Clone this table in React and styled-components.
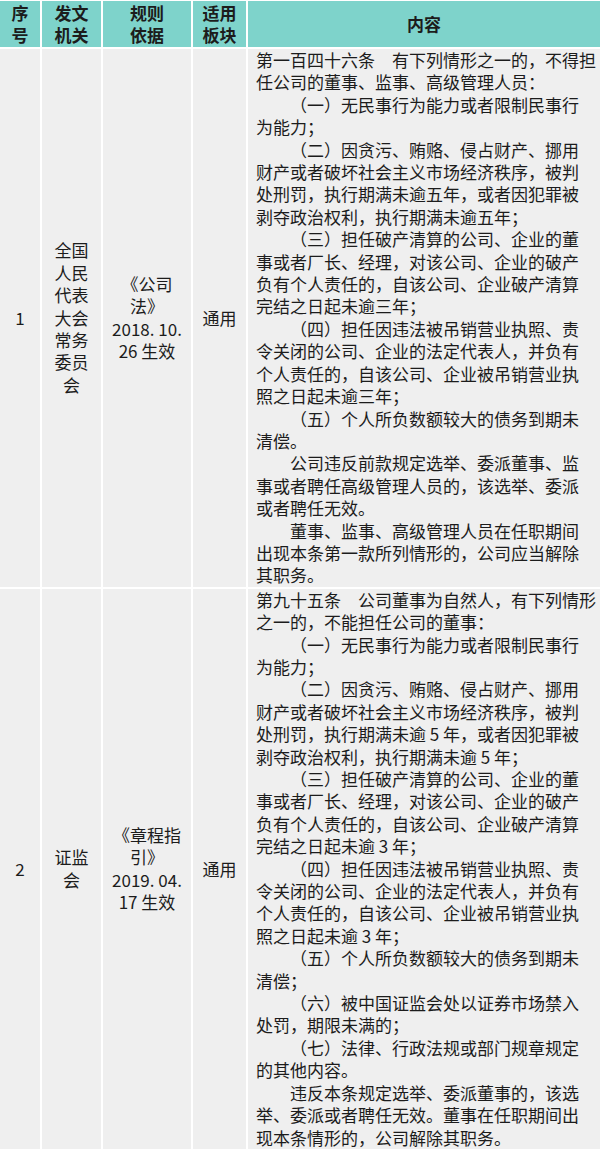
import React from 'react';
import styled, { createGlobalStyle } from 'styled-components';

const GlobalStyle = createGlobalStyle`
  html, body {
    margin: 0;
    padding: 0;
    background: #ffffff;
  }
  body {
    font-family: "Noto Sans CJK SC", "Noto Sans", sans-serif;
    color: #1c1c1c;
  }
`;

const COLUMNS = '40px 59px 88px 53px 1fr';

const Table = styled.div`
  display: flex;
  flex-direction: column;
  gap: 2px;
  width: 600px;
  padding-top: 1px;
  background: #ffffff;
`;

const Row = styled.div`
  display: grid;
  grid-template-columns: ${COLUMNS};
  gap: 2px;
`;

const HeadCell = styled.div`
  display: flex;
  flex-direction: column;
  align-items: center;
  justify-content: center;
  height: 46px;
  background: #7ed3cb;
  font-size: 17px;
  font-weight: 700;
  line-height: 22.4px;
  text-align: center;
`;

const Cell = styled.div`
  display: flex;
  flex-direction: column;
  align-items: center;
  justify-content: center;
  background: #efefef;
  font-size: 17px;
  line-height: 22.4px;
  text-align: center;
`;

const ContentCell = styled.div`
  background: #efefef;
  font-size: 17px;
  line-height: 22.4px;
  padding: 0 4px 0 8px;
`;

const Line = styled.span`
  display: block;
  white-space: nowrap;
  padding-left: ${(p) => (p.$indent ? '2em' : '0')};
`;

const headers = [
  ['序', '号'],
  ['发文', '机关'],
  ['规则', '依据'],
  ['适用', '板块'],
  ['内容'],
];

const rows = [
  {
    no: '1',
    issuer: ['全国', '人民', '代表', '大会', '常务', '委员', '会'],
    basis: ['《公司', '法》', '2018. 10.', '26 生效'],
    scope: '通用',
    content: [
      ['第一百四十六条　有下列情形之一的，不得担', '任公司的董事、监事、高级管理人员：'],
      ['（一）无民事行为能力或者限制民事行', '为能力；'],
      [
        '（二）因贪污、贿赂、侵占财产、挪用',
        '财产或者破坏社会主义市场经济秩序，被判',
        '处刑罚，执行期满未逾五年，或者因犯罪被',
        '剥夺政治权利，执行期满未逾五年；',
      ],
      [
        '（三）担任破产清算的公司、企业的董',
        '事或者厂长、经理，对该公司、企业的破产',
        '负有个人责任的，自该公司、企业破产清算',
        '完结之日起未逾三年；',
      ],
      [
        '（四）担任因违法被吊销营业执照、责',
        '令关闭的公司、企业的法定代表人，并负有',
        '个人责任的，自该公司、企业被吊销营业执',
        '照之日起未逾三年；',
      ],
      ['（五）个人所负数额较大的债务到期未', '清偿。'],
      ['公司违反前款规定选举、委派董事、监', '事或者聘任高级管理人员的，该选举、委派', '或者聘任无效。'],
      ['董事、监事、高级管理人员在任职期间', '出现本条第一款所列情形的，公司应当解除', '其职务。'],
    ],
  },
  {
    no: '2',
    issuer: ['证监', '会'],
    basis: ['《章程指', '引》', '2019. 04.', '17 生效'],
    scope: '通用',
    content: [
      ['第九十五条　公司董事为自然人，有下列情形', '之一的，不能担任公司的董事：'],
      ['（一）无民事行为能力或者限制民事行', '为能力；'],
      [
        '（二）因贪污、贿赂、侵占财产、挪用',
        '财产或者破坏社会主义市场经济秩序，被判',
        '处刑罚，执行期满未逾 5 年，或者因犯罪被',
        '剥夺政治权利，执行期满未逾 5 年；',
      ],
      [
        '（三）担任破产清算的公司、企业的董',
        '事或者厂长、经理，对该公司、企业的破产',
        '负有个人责任的，自该公司、企业破产清算',
        '完结之日起未逾 3 年；',
      ],
      [
        '（四）担任因违法被吊销营业执照、责',
        '令关闭的公司、企业的法定代表人，并负有',
        '个人责任的，自该公司、企业被吊销营业执',
        '照之日起未逾 3 年；',
      ],
      ['（五）个人所负数额较大的债务到期未', '清偿；'],
      ['（六）被中国证监会处以证券市场禁入', '处罚，期限未满的；'],
      ['（七）法律、行政法规或部门规章规定', '的其他内容。'],
      ['违反本条规定选举、委派董事的，该选', '举、委派或者聘任无效。董事在任职期间出', '现本条情形的，公司解除其职务。'],
    ],
  },
];

function Lines({ lines }) {
  return lines.map((text, i) => <Line key={i}>{text}</Line>);
}

function RuleRow({ row }) {
  return (
    <Row>
      <Cell>{row.no}</Cell>
      <Cell>
        <Lines lines={row.issuer} />
      </Cell>
      <Cell>
        <Lines lines={row.basis} />
      </Cell>
      <Cell>{row.scope}</Cell>
      <ContentCell>
        {row.content.map((para, p) =>
          para.map((text, i) => (
            <Line key={`${p}-${i}`} $indent={p > 0 && i === 0}>
              {text}
            </Line>
          ))
        )}
      </ContentCell>
    </Row>
  );
}

export default function App() {
  return (
    <>
      <GlobalStyle />
      <Table>
        <Row>
          {headers.map((label, i) => (
            <HeadCell key={i}>
              <Lines lines={label} />
            </HeadCell>
          ))}
        </Row>
        {rows.map((row) => (
          <RuleRow key={row.no} row={row} />
        ))}
      </Table>
    </>
  );
}
